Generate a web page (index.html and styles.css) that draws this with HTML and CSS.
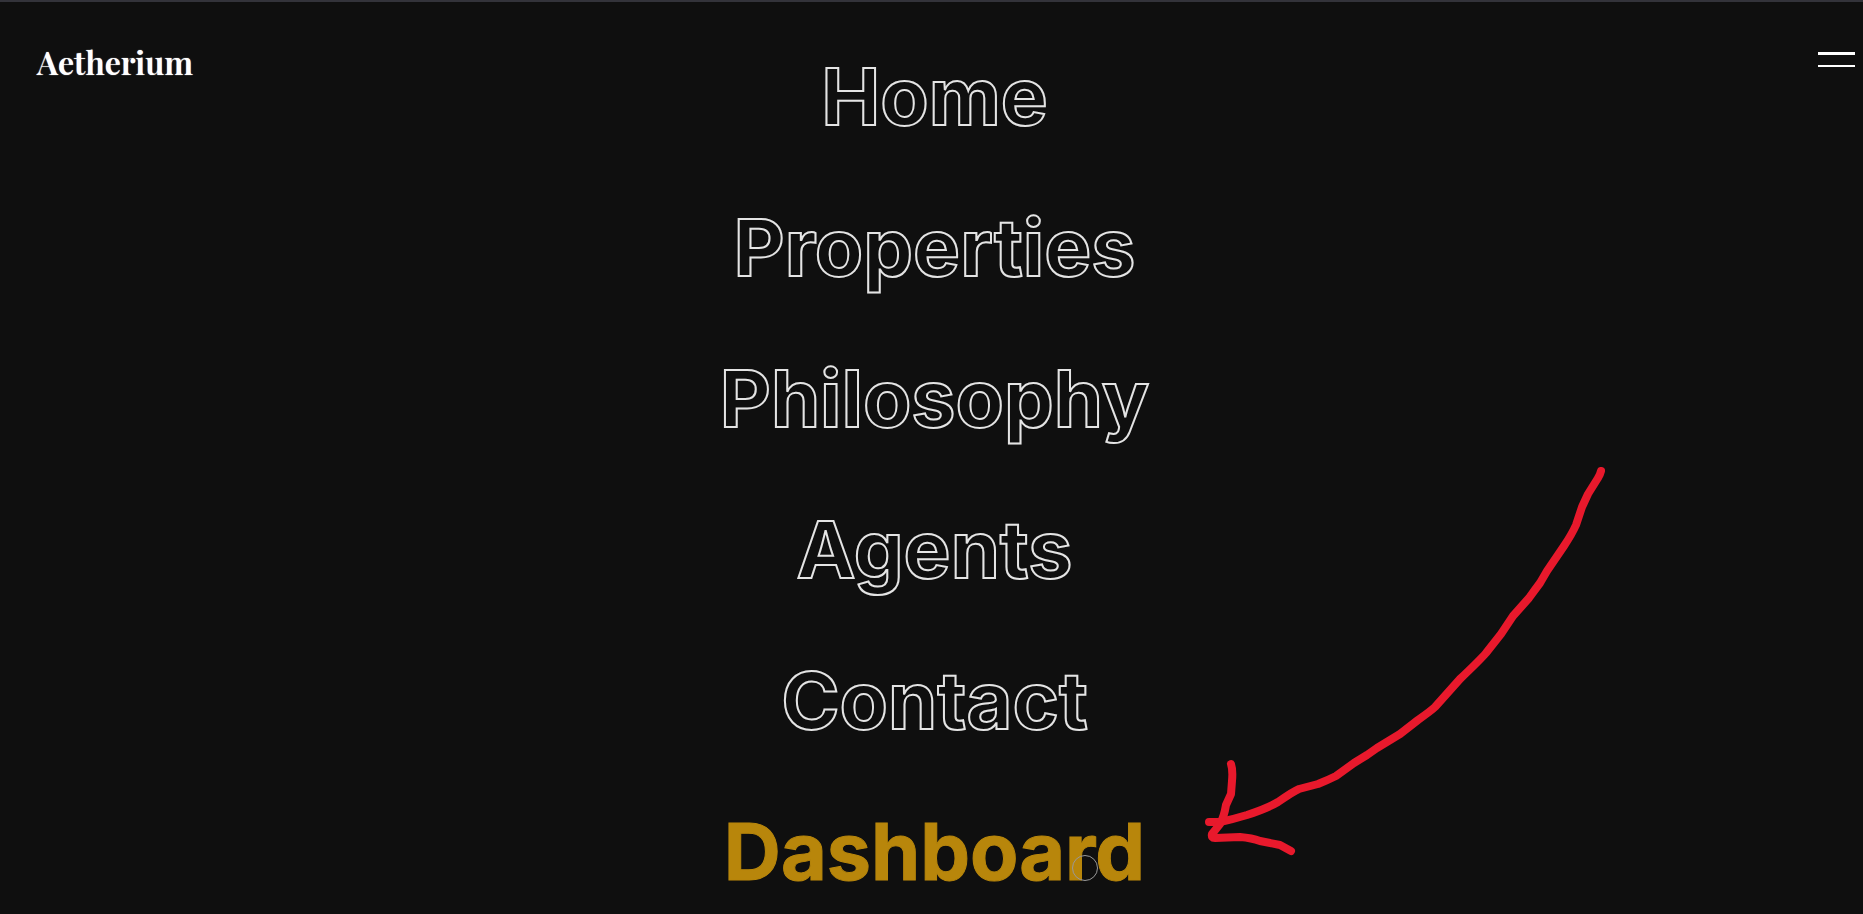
FILE: index.html
```html
<!DOCTYPE html>
<html lang="en">
<head>
<meta charset="utf-8">
<meta name="viewport" content="width=device-width, initial-scale=1">
<title>Aetherium</title>
<link rel="stylesheet" href="styles.css">
</head>
<body>
<header class="bar">
  <a class="brand" href="#">Aetherium</a>
  <button class="toggle" type="button" aria-label="Close menu"><span class="toggle-line toggle-line-top"></span><span class="toggle-line"></span></button>
</header>
<nav class="menu" aria-label="Main">
  <a class="menu-link" href="#">Home</a>
  <a class="menu-link" href="#">Properties</a>
  <a class="menu-link" href="#">Philosophy</a>
  <a class="menu-link" href="#">Agents</a>
  <a class="menu-link" href="#">Contact</a>
  <a class="menu-link menu-link-active" href="#">Dashboard<span class="cursor"></span></a>
</nav>
<svg class="arrow" viewBox="0 2 1863 912" fill="none" aria-hidden="true">
  <path d="M1601 471Q1600 475 1598 478L1588 494L1582 507L1576 525Q1572 534 1564 546L1547 571L1540 583Q1534 591 1529 598L1513 616L1501 634L1486 653Q1480 660 1460 679L1435 707Q1432 710 1418 720L1400 734L1377 748L1367 755L1354 763L1336 776Q1328 780 1318 784L1299 789Q1294 791 1278 802Q1268 808 1247 815Q1234 819 1220 822H1209"/>
  <path d="M1231 764Q1233 770 1232 781L1231 794L1226 805Q1224 817 1220 824L1212 834Q1211 838 1215 838L1240 837Q1252 838 1260 841L1280 845L1291 851"/>
</svg>
</body>
</html>
```
FILE: styles.css
```css
* { box-sizing: border-box; }
body {
  margin: 0;
  min-height: 100vh;
  position: relative;
  overflow: hidden;
  background: #0f0f0f;
  color: #fff;
  font-family: Inter, "Liberation Sans", sans-serif;
  border-top: 2px solid #33333a;
}
.bar {
  position: absolute;
  inset: 0 0 auto;
  display: flex;
  justify-content: space-between;
  align-items: flex-start;
  padding: 38px 8px 0 37px;
}
.brand {
  color: #fff;
  font-family: "Playfair Display", "Noto Serif", "DejaVu Serif", serif;
  font-size: 32px;
  font-weight: 600;
  line-height: 44px;
  text-decoration: none;
  text-shadow: 0 0 1px #fff;
}
.toggle {
  display: flex;
  flex-direction: column;
  gap: 10px;
  width: 37px;
  margin-top: 12px;
  padding: 0;
  border: 0;
  background: none;
}
.toggle-line { height: 2px; background: #fff; }
.toggle-line-top { height: 3px; }
.menu {
  display: flex;
  flex-direction: column;
  align-items: center;
  gap: 32px;
  padding: 35px 0 0 6px;
}
.menu-link {
  position: relative;
  font-size: 79px;
  font-weight: 700;
  line-height: 119px;
  color: transparent;
  -webkit-text-stroke: 2px #e4e4e4;
  text-decoration: none;
}
.menu-link-active { color: #b8860b; -webkit-text-stroke: 1px #b8860b; }
.cursor {
  position: absolute;
  right: 47px;
  bottom: 30px;
  width: 26px;
  height: 26px;
  border: 1px solid #999;
  border-radius: 50%;
}
.arrow {
  position: absolute;
  inset: 0;
  width: 100%;
  pointer-events: none;
  stroke: #e8192c;
  stroke-width: 8;
  stroke-linecap: round;
  stroke-linejoin: round;
}
```
